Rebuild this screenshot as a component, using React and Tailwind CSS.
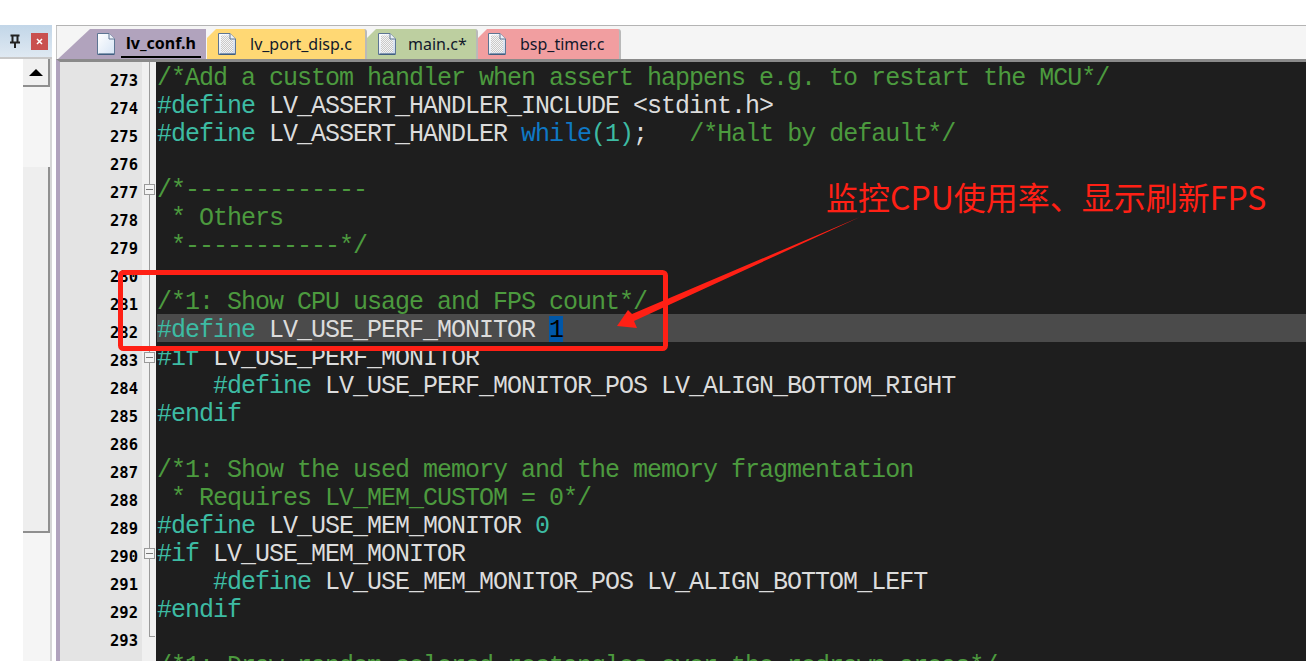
const C = 'text-[#4c9a3e]';
const D = 'text-[#3dbba3]';
const T = 'text-[#dcdcdc]';
const K = 'text-[#0f78c4]';

const LINES = [
  { n: 273, s: [[C, '/*Add a custom handler when assert happens e.g. to restart the MCU*/']] },
  { n: 274, s: [[D, '#define'], [T, ' LV_ASSERT_HANDLER_INCLUDE <stdint.h>']] },
  { n: 275, s: [[D, '#define'], [T, ' LV_ASSERT_HANDLER '], [K, 'while'], [D, '(1)'], [T, ';   '], [C, '/*Halt by default*/']] },
  { n: 276, s: [] },
  { n: 277, fold: true, s: [[C, '/*-------------']] },
  { n: 278, s: [[C, ' * Others']] },
  { n: 279, s: [[C, ' *-----------*/']] },
  { n: 280, s: [] },
  { n: 281, s: [[C, '/*1: Show CPU usage and FPS count*/']] },
  { n: 282, hl: true, s: [[D, '#define'], [T, ' LV_USE_PERF_MONITOR '], ['sel', '1']] },
  { n: 283, fold: true, s: [[D, '#if'], [T, ' LV_USE_PERF_MONITOR']] },
  { n: 284, s: [[D, '    #define'], [T, ' LV_USE_PERF_MONITOR_POS LV_ALIGN_BOTTOM_RIGHT']] },
  { n: 285, s: [[D, '#endif']] },
  { n: 286, s: [] },
  { n: 287, s: [[C, '/*1: Show the used memory and the memory fragmentation']] },
  { n: 288, s: [[C, ' * Requires LV_MEM_CUSTOM = 0*/']] },
  { n: 289, s: [[D, '#define'], [T, ' LV_USE_MEM_MONITOR '], [D, '0']] },
  { n: 290, fold: true, s: [[D, '#if'], [T, ' LV_USE_MEM_MONITOR']] },
  { n: 291, s: [[D, '    #define'], [T, ' LV_USE_MEM_MONITOR_POS LV_ALIGN_BOTTOM_LEFT']] },
  { n: 292, s: [[D, '#endif']] },
  { n: 293, end: true, s: [] },
  { n: null, none: true, s: [[C, '/*1: Draw random colored rectangles over the redrawn areas*/']] },
];

function DocIcon({ active }) {
  const id = active ? 'doc-a' : 'doc-b';
  return (
    <svg width="20" height="24" viewBox="0 0 20 24" className="shrink-0">
      <defs>
        <pattern id="dots" width="2" height="2" patternUnits="userSpaceOnUse">
          <rect width="2" height="2" fill="#f4f4f4" />
          <rect width="1" height="1" fill="#c9c9c9" />
          <rect x="1" y="1" width="1" height="1" fill="#c9c9c9" />
        </pattern>
        <linearGradient id="doc-a" x1="0" y1="0" x2="1" y2="1">
          <stop offset="0" stopColor="#ffffff" />
          <stop offset="1" stopColor="#d6e4f5" />
        </linearGradient>
        <linearGradient id="doc-b" x1="0" y1="0" x2="1" y2="1">
          <stop offset="0" stopColor="#ffffff" />
          <stop offset="1" stopColor="#c9d6ea" />
        </linearGradient>
      </defs>
      <path d="M1.5 1.5H13L18.5 7V22.5H1.5Z" fill={`url(#${id})`} stroke="#5d7593" />
      {!active && <path d="M4 3.5H12L16 8V20.5H4Z" fill="url(#dots)" />}
      <path d="M13 1.5V7H18.5" fill="#eef3fa" stroke="#5d7593" />
      <path d="M2.5 22H18" stroke="#27486f" strokeWidth="1.2" />
    </svg>
  );
}

function Tab({ label, width, color, pad, gap }) {
  return (
    <div className={`relative h-[30px] flex items-center shrink-0 rounded-tr-[3px] ${width} ${color} ${pad} [clip-path:polygon(9px_0,100%_0,100%_100%,0_100%,0_9px)] border-r-2 border-[#b9b9b9]`}>
      <DocIcon />
      <span className={`${gap} text-[16px] leading-[30px] text-[#11182b] font-['Noto_Sans',sans-serif]`}>{label}</span>
    </div>
  );
}

function ActiveTab() {
  return (
    <div className="relative h-[30px] w-[148px] shrink-0 flex items-center pl-[38px] bg-[#b1a3bd] [clip-path:polygon(32px_0,100%_0,100%_100%,0_100%)]">
      <DocIcon active />
      <span className="ml-[5px] text-[16px] font-bold leading-[26px] text-black border-b-2 border-black px-[5px] font-['Noto_Sans',sans-serif]">lv_conf.h</span>
    </div>
  );
}

function Row({ line }) {
  return (
    <div className="flex h-[28px] shrink-0">
      <div className="w-[82px] bg-[#e4e4e4] text-right pr-[4px] text-[15.5px] font-bold leading-[38px] text-black font-['DejaVu_Sans_Mono',monospace]">
        {line.n}
      </div>
      <div className="relative w-[14px] bg-[#f0f0f0] flex justify-center">
        {!line.none && !line.end && <div className="w-px h-full bg-[#9a9a9a]" />}
        {line.end && <div className="w-px h-[15px] bg-[#9a9a9a]" />}
        {line.end && <div className="absolute left-[7px] top-[14px] w-[6px] h-px bg-[#9a9a9a]" />}
        {line.fold && (
          <div className="absolute left-[2px] top-[10px] w-[11px] h-[11px] border border-[#9a9a9a] bg-[#f4f4f4] flex items-center justify-center">
            <div className="w-[7px] h-px bg-[#777]" />
          </div>
        )}
      </div>
      <div className="flex-1 bg-[#1e1e1e] pl-px">
        <div className={`h-[28px] whitespace-pre text-[25px] tracking-[-1px] leading-[34px] font-['Liberation_Mono',monospace] ${line.hl ? 'bg-[#4b4b4b]' : ''}`}>
          {line.s.map(([cls, txt], i) =>
            cls === 'sel' ? (
              <span key={i} className="bg-[#0057a8] text-black">{txt}</span>
            ) : (
              <span key={i} className={cls}>{txt}</span>
            )
          )}
        </div>
      </div>
    </div>
  );
}

export default function App() {
  return (
    <div className="relative w-[1306px] h-[661px] overflow-hidden bg-white flex flex-col">
      <div className="h-[25px] shrink-0 bg-white" />
      <div className="flex flex-1 min-h-0">
        <div className="w-[52px] shrink-0 flex flex-col">
          <div className="h-[32px] shrink-0 flex items-center justify-end gap-[9px] pr-[4px] bg-gradient-to-b from-[#c2d6e8] to-[#dfe9f2]">
            <svg width="14" height="14" viewBox="0 0 14 14">
              <path d="M2.5 1.5H11.5M4.5 1.5V8M9.5 1.5V8M2 8.5H12" stroke="#222" strokeWidth="2" fill="none" />
              <path d="M7 9V14" stroke="#222" strokeWidth="2" />
            </svg>
            <div className="w-[17px] h-[17px] bg-[#c9504f] flex items-center justify-center">
              <svg width="7" height="7" viewBox="0 0 7 7">
                <path d="M1 1L6 6M6 1L1 6" stroke="#fff" strokeWidth="1.5" />
              </svg>
            </div>
          </div>
          <div className="h-[2px] shrink-0 bg-[#c8c8c8]" />
          <div className="flex-1 flex pl-[23px] border-r-2 border-[#d6d6d6]">
            <div className="flex-1 flex flex-col bg-[#f5f5f5]">
              <div className="h-[28px] shrink-0 bg-[#f0f0f0] border-r-2 border-b-2 border-[#8f8f8f] flex items-center justify-center">
                <div className="w-0 h-0 border-l-[7px] border-r-[7px] border-b-[7px] border-l-transparent border-r-transparent border-b-black" />
              </div>
              <div className="h-[80px] shrink-0" />
              <div className="h-[366px] shrink-0 bg-[#eeeeee] border-r-2 border-b-2 border-[#8f8f8f]" />
            </div>
          </div>
        </div>
        <div className="w-[4px] shrink-0 bg-white" />
        <div className="flex-1 min-w-0 flex flex-col border-t border-[#b4b4b4] bg-[#f5f5f5]">
          <div className="h-[33px] shrink-0 flex items-end pl-px border-l border-[#c4c4c4]">
            <ActiveTab />
            <div className="w-px" />
            <Tab label="lv_port_disp.c" width="w-[160px]" color="bg-[#ffd874]" pad="pl-[10px]" gap="ml-[13px]" />
            <Tab label="main.c*" width="w-[111px]" color="bg-[#bdcfa0]" pad="pl-[10px]" gap="ml-[11px]" />
            <Tab label="bsp_timer.c" width="w-[143px]" color="bg-[#f19ea0]" pad="pl-[9px]" gap="ml-[13px]" />
          </div>
          <div className="flex-1 min-h-0 flex flex-col border-t-[3px] border-l-4 border-t-[#8a8a8a] border-l-[#b1a3bd] overflow-hidden bg-[#1e1e1e]">
            {LINES.map((l, i) => (
              <Row key={i} line={l} />
            ))}
          </div>
        </div>
      </div>

      <div className="absolute left-[826px] top-[176px] text-[32px] leading-[40px] whitespace-nowrap text-[#ff2015] font-['Noto_Sans_CJK_SC','Noto_Sans',sans-serif]">
        监控CPU使用率、显示刷新FPS
      </div>
      <svg className="absolute left-0 top-0 pointer-events-none" width="1306" height="661" viewBox="0 0 1306 661">
        <rect x="120.5" y="272.5" width="545" height="76" rx="3" fill="none" stroke="#ff2015" strokeWidth="5" />
        <polygon points="860,217 632,314 628,310 617,326 637,328 634,321" fill="#ff2015" />
      </svg>
    </div>
  );
}
